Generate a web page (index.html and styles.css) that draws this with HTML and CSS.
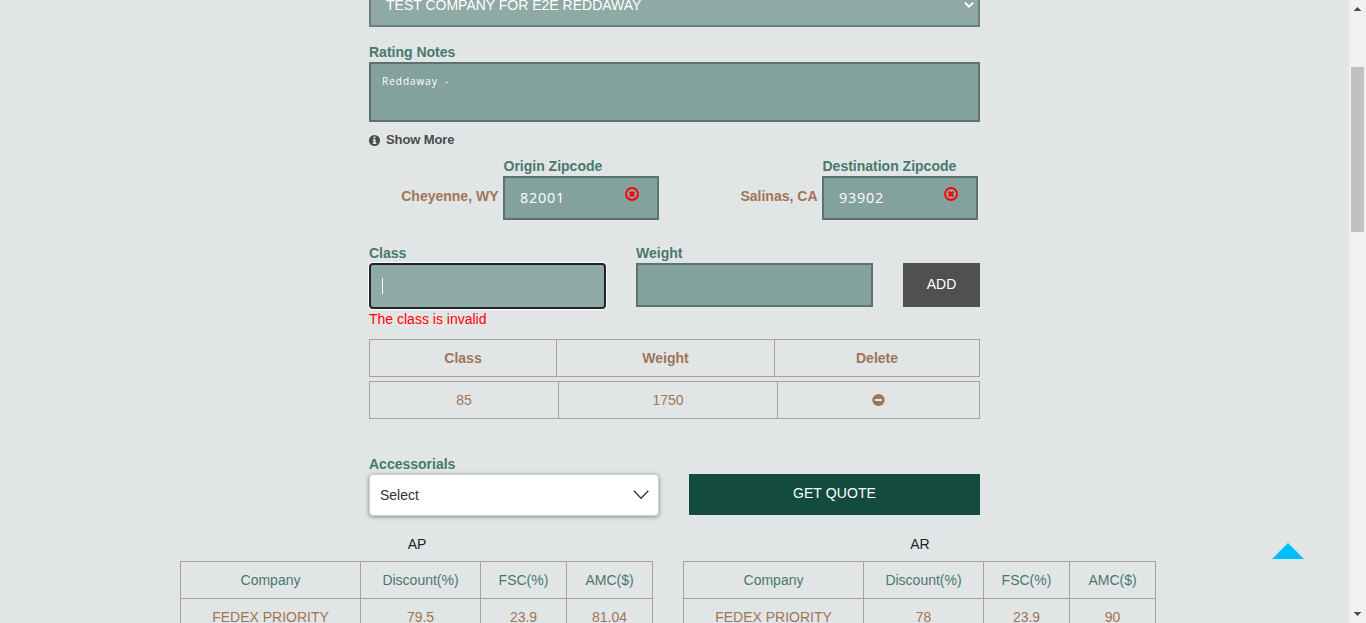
FILE: index.html
```
<!DOCTYPE html>
<html lang="en">
<head>
<meta charset="utf-8">
<title>Rating</title>
<link rel="stylesheet" href="styles.css">
</head>
<body>
<div class="page">
  <main class="form">
    <div class="company"><span class="company-name">TEST COMPANY FOR E2E REDDAWAY</span>
      <svg class="company-arrow" width="12" height="8" viewBox="0 0 12 8"><path d="M1.8 1.6 6 5.6l4.2-4" fill="none" stroke="#fff" stroke-width="1.9"/></svg>
    </div>
    <div class="label notes-label"><span>Rating Notes</span></div>
    <div class="notes">Reddaway&nbsp; -</div>
    <div class="more">
      <svg width="11" height="11" viewBox="0 0 11 11"><circle cx="5.5" cy="5.5" r="5.5" fill="#4a4a4a"/><path d="M4.5 1.4h2v1.8h-2zM3.7 4.2h2.9v3.4h.8v1.4H3.7V7.6h.8V5.5h-.8z" fill="#e1e5e6"/></svg>
      <span>Show More</span>
    </div>
    <div class="zips">
      <div class="zip">
        <span class="city">Cheyenne, WY</span>
        <div class="zip-col">
          <div class="label"><span>Origin Zipcode</span></div>
          <div class="box zip-box"><span>82001</span>
            <svg width="14" height="14" viewBox="0 0 14 14"><circle cx="7" cy="7" r="6" fill="none" stroke="red" stroke-width="1.8"/><path d="m4.8 4.8 4.4 4.4m0-4.4L4.8 9.2" stroke="red" stroke-width="2.3"/></svg>
          </div>
        </div>
      </div>
      <div class="zip">
        <span class="city">Salinas, CA</span>
        <div class="zip-col">
          <div class="label"><span>Destination Zipcode</span></div>
          <div class="box zip-box"><span>93902</span>
            <svg width="14" height="14" viewBox="0 0 14 14"><circle cx="7" cy="7" r="6" fill="none" stroke="red" stroke-width="1.8"/><path d="m4.8 4.8 4.4 4.4m0-4.4L4.8 9.2" stroke="red" stroke-width="2.3"/></svg>
          </div>
        </div>
      </div>
    </div>
    <div class="entry">
      <div class="field">
        <div class="label"><span>Class</span></div>
        <div class="box focused"><i class="caret"></i></div>
        <div class="error">The class is invalid</div>
      </div>
      <div class="field">
        <div class="label"><span>Weight</span></div>
        <div class="box"></div>
      </div>
      <div class="add">ADD</div>
    </div>
    <div class="items items-head"><div>Class</div><div>Weight</div><div>Delete</div></div>
    <div class="items items-row"><div>85</div><div>1750</div><div>
      <svg width="13" height="12" viewBox="0 0 13 12"><ellipse cx="6.5" cy="6" rx="6.2" ry="6" fill="#a07556"/><path d="M3 5h7v2H3z" fill="#e1e5e6"/></svg>
    </div></div>
    <div class="actions">
      <div class="accessorials">
        <div class="label"><span>Accessorials</span></div>
        <div class="dropdown"><span>Select</span>
          <svg width="16" height="10" viewBox="0 0 16 10"><path d="M.9.8 8.1 8.2 15.3.8" fill="none" stroke="#333" stroke-width="1.3"/></svg>
        </div>
      </div>
      <div class="quote">GET QUOTE</div>
    </div>
  </main>
  <section class="rates">
    <div class="rate">
      <div class="rate-title">AP</div>
      <div class="grid">
        <div class="head">Company</div><div class="head">Discount(%)</div><div class="head">FSC(%)</div><div class="head">AMC($)</div>
        <div>FEDEX PRIORITY</div><div>79.5</div><div>23.9</div><div>81.04</div>
      </div>
    </div>
    <div class="rate">
      <div class="rate-title">AR</div>
      <div class="grid">
        <div class="head">Company</div><div class="head">Discount(%)</div><div class="head">FSC(%)</div><div class="head">AMC($)</div>
        <div>FEDEX PRIORITY</div><div>78</div><div>23.9</div><div>90</div>
      </div>
    </div>
  </section>
  <svg class="to-top" width="32" height="16" viewBox="0 0 32 16"><path d="M0 16 16 0l16 16z" fill="#00bfff"/></svg>
</div>
<div class="scrollbar">
  <svg width="7" height="4" viewBox="0 0 7 4" shape-rendering="crispEdges"><path d="M0 4V3h1V2h1V1h1V0h1v1h1v1h1v1h1v1z" fill="#505050"/></svg>
  <div class="thumb"></div>
  <svg width="7" height="4" viewBox="0 0 7 4" shape-rendering="crispEdges"><path d="M0 0v1h1v1h1v1h1v1h1V3h1V2h1V1h1V0z" fill="#505050"/></svg>
</div>
</body>
</html>
```
FILE: styles.css
```
* { box-sizing: border-box; }
body {
  margin: 0;
  height: 623px;
  display: flex;
  overflow: hidden;
  background: #e1e5e6;
  font: 14px/20px "Liberation Sans", Arial, sans-serif;
  color: #212529;
}
svg { display: block; flex: none; }
.page { width: 1349px; height: 623px; overflow: hidden; position: relative; }
.form { width: 611px; margin-left: 369px; }
.company {
  height: 27px;
  display: flex;
  justify-content: space-between;
  padding: 0 3px 0 15px;
  background: #8fa9a5;
  border: solid #6b7f7b;
  border-width: 0 2px 2px;
  color: #fff;
}
.company-name { line-height: 10px; }
.company-arrow { margin-top: 1px; }
.label { height: 20px; color: #47796c; font-weight: bold; white-space: nowrap; }
.notes-label { margin-top: 15px; }
.notes {
  height: 60px;
  padding: 7px 11px;
  border: 2px solid #5a736d;
  background: #84a29d;
  color: #fff;
  font: 500 10px/20px "Open Sans", sans-serif;
  letter-spacing: 1px;
}
.more {
  display: flex;
  align-items: center;
  gap: 6px;
  height: 20px;
  margin-top: 8px;
  color: #4a4a4a;
  font-size: 13px;
  font-weight: bold;
  letter-spacing: -.1px;
}
.zips { display: flex; justify-content: space-between; padding-right: 2px; margin-top: 6px; height: 64px; }
.zip { display: flex; width: 290px; justify-content: flex-end; }
.city { color: #a07556; font-weight: bold; padding-top: 30px; margin-right: 4.5px; white-space: nowrap; }
.zip-col { width: 156px; flex: none; }
.zip-col .label { padding-left: .5px; }
.box { height: 44px; border: 2px solid #5a736d; background: #84a29d; }
.zip-box {
  display: flex;
  justify-content: space-between;
  padding: 0 18px 0 15px;
  color: #fff;
  font: 14.4px/40px "Open Sans", sans-serif;
  letter-spacing: .8px;
}
.zip-box svg { margin-top: 9px; }
.entry { display: flex; gap: 30px; height: 96px; margin-top: 23px; }
.field { width: 237px; }
.focused {
  height: 46px;
  padding: 13px 11px;
  border-color: #212529;
  border-radius: 4px;
  background: #8fa9a5;
  box-shadow: 0 0 0 1px #fff;
}
.caret { display: block; width: 1px; height: 16px; background: #fff; }
.error { color: red; }
.add { width: 77px; height: 44px; margin-top: 20px; background: #505050; color: #fff; text-align: center; line-height: 43px; }
.items { display: grid; height: 38px; border: 1px solid #aa9f9f; color: #a07556; text-align: center; line-height: 36px; }
.items > div + div { border-left: 1px solid #aa9f9f; }
.items-head { grid-template-columns: 186px 218px 205px; font-weight: bold; }
.items-row { grid-template-columns: 188px 219px 202px; margin-top: 4px; }
.items svg { margin: 12px auto 0; }
.actions { display: flex; justify-content: space-between; margin-top: 35px; }
.accessorials { width: 290px; }
.dropdown {
  display: flex;
  justify-content: space-between;
  height: 42px;
  padding: 0 9.5px 0 10px;
  border: 1px solid #ccc;
  border-radius: 4px;
  background: #fff;
  box-shadow: 0 1px 4px rgba(0, 0, 0, .4);
  color: #333;
  line-height: 40px;
}
.dropdown svg { margin-top: 15px; }
.quote { width: 291px; height: 41px; margin-top: 20px; background: #134b3e; color: #fff; text-align: center; line-height: 38px; letter-spacing: .1px; }
.rates { display: flex; gap: 30px; margin: 18px 0 0 180px; }
.rate { width: 473px; }
.rate-title { height: 27px; padding-left: 1px; text-align: center; }
.grid {
  display: grid;
  grid-template-columns: 180px 120px 86px 86px;
  grid-template-rows: 37px 37px;
  width: 473px;
  border-right: 1px solid #aa9f9f;
  color: #a07556;
  text-align: center;
  line-height: 37px;
}
.grid > div { border: solid #aa9f9f; border-width: 1px 0 0 1px; white-space: nowrap; }
.grid .head { color: #47796c; }
.to-top { position: absolute; left: 1272px; top: 543px; }
.scrollbar { width: 17px; height: 623px; padding: 7px 0; background: #f1f1f1; display: flex; flex-direction: column; align-items: center; }
.thumb { width: 13px; height: 165px; margin: 56px 0 auto; background: #c1c1c1; }
```
